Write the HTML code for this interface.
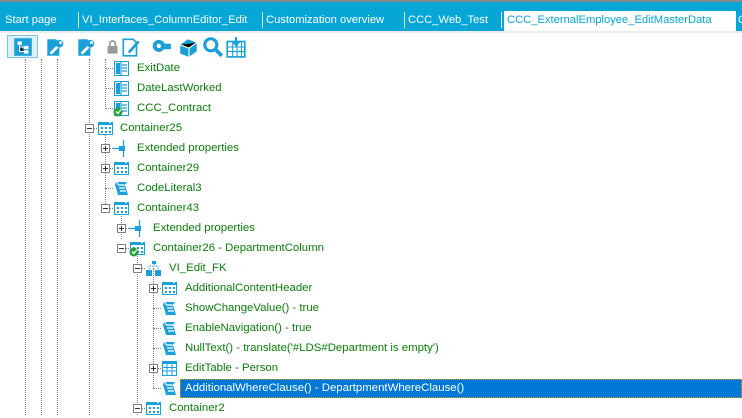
<!DOCTYPE html>
<html><head><meta charset="utf-8"><style>
*{margin:0;padding:0;box-sizing:border-box}
body{width:742px;height:415px;overflow:hidden;background:#fff;font-family:"Liberation Sans",sans-serif;font-size:11.4px;position:relative}
.topline{position:absolute;left:0;top:0;width:742px;height:2px;background:#8a8a8a}
.tabs{position:absolute;left:0;top:2px;width:742px;height:29px;background:#06a6d6}
.tab{position:absolute;top:11px;height:20px;line-height:19px;color:#fff;white-space:nowrap;font-size:11.2px}
.sep{position:absolute;top:12px;width:1px;height:16px;background:#d8eef7}
.act{position:absolute;left:504px;top:11px;width:232px;height:20px;background:#fff;color:#06a6d6;padding-left:3px;line-height:19px;font-size:11.2px;white-space:nowrap}
.gl{position:absolute;left:0;top:31px;width:742px;height:2px;background:#ececec}
.row{position:absolute;height:20px;line-height:20px;color:#0a7f0a;white-space:nowrap}
.vl{position:absolute;width:1px;border-left:1px dotted #808080}
.hl{position:absolute;height:1px;border-top:1px dotted #808080}
.box{position:absolute;width:9px;height:9px;border:1px solid #808080;background:#fff}
.box:before{content:"";position:absolute;left:1px;top:3px;width:5px;height:1px;background:#333}
.box.p:after{content:"";position:absolute;left:3px;top:1px;width:1px;height:5px;background:#333}
svg.i{position:absolute;width:17px;height:17px;overflow:visible}
.sel{position:absolute;left:180px;top:379px;width:562px;height:19px;background:#0078d7;border:1px dotted #e0a000}
.tb{position:absolute;top:36px;width:22px;height:22px}
</style></head><body>
<svg width="0" height="0" style="position:absolute">
<defs>
<symbol id="col" viewBox="0 0 17 17"><rect x="1.5" y="1.5" width="14" height="14" fill="#fff" stroke="#1aa0d8"/><rect x="3" y="3" width="4" height="11" fill="#1aa0d8"/><path d="M9 5h5M9 8h5M9 11h5M8 2v13" stroke="#1aa0d8" stroke-width="1.2"/></symbol>
<symbol id="cont" viewBox="0 0 17 17"><rect x="1.5" y="2.5" width="14" height="12" fill="#fff" stroke="#1aa0d8"/><rect x="1" y="2" width="15" height="3" fill="#1aa0d8"/><g fill="#1aa0d8"><rect x="4" y="7" width="2" height="2"/><rect x="8" y="7" width="2" height="2"/><rect x="12" y="7" width="2" height="2"/><rect x="4" y="11" width="2" height="2"/><rect x="8" y="11" width="2" height="2"/><rect x="12" y="11" width="2" height="2"/></g><rect x="12" y="2" width="2" height="1" fill="#fff"/></symbol>
<symbol id="ext" viewBox="0 0 17 17"><path d="M0 8.5h6M10.5 0v17" stroke="#1aa0d8" stroke-width="1.3"/><rect x="6" y="6" width="6" height="5" fill="#1aa0d8"/></symbol>
<symbol id="scr" viewBox="0 0 17 17"><path d="M3 2h11l-2 3 3 10H5L2 5z" fill="#1aa0d8"/><path d="M5 5h7M6 8h6M7 11h6" stroke="#fff" stroke-width="1.2"/><path d="M2 2q3 0 3 3" stroke="#fff" fill="none"/></symbol>
<symbol id="fk" viewBox="0 0 17 17"><path d="M4 11V6h9v5M9 2v4" stroke="#1aa0d8" stroke-dasharray="1 1" fill="none"/><rect x="1" y="10" width="6" height="6" fill="#1aa0d8"/><rect x="10" y="10" width="6" height="6" fill="#1aa0d8"/><rect x="7" y="1" width="4" height="3" fill="#1aa0d8"/></symbol>
<symbol id="tbl" viewBox="0 0 17 17"><rect x="1.5" y="1.5" width="14" height="14" fill="#fff" stroke="#1aa0d8"/><rect x="1" y="1" width="15" height="3" fill="#1aa0d8"/><path d="M1 7.5h15M1 11h15M6 1v15M11 1v15" stroke="#1aa0d8"/></symbol>
<symbol id="chk" viewBox="0 0 17 17"><circle cx="5" cy="12" r="4.5" fill="#2e9e3a"/><path d="M3 11.5l2 2 3-4" stroke="#fff" stroke-width="1.3" fill="none"/></symbol>
</defs></svg>

<div class="topline"></div>
<div class="tabs"></div>
<div class="tab" style="left:5px">Start page</div>
<div class="sep" style="left:78px"></div>
<div class="tab" style="left:82px">VI_Interfaces_ColumnEditor_Edit</div>
<div class="sep" style="left:262px"></div>
<div class="tab" style="left:266px">Customization overview</div>
<div class="sep" style="left:404px"></div>
<div class="tab" style="left:408px">CCC_Web_Test</div>
<div class="sep" style="left:501px"></div>
<div class="act">CCC_ExternalEmployee_EditMasterData</div>
<div class="tab" style="left:738px">C</div>
<div class="gl"></div>

<!-- toolbar -->
<div style="position:absolute;left:7px;top:35px;width:31px;height:23px;border:1px solid #7cc4e4;background:#ddf0fa"></div>
<svg class="tb" style="left:12px" viewBox="0 0 20 20"><rect x="2" y="2" width="16" height="16" fill="#1aa0d8"/><rect x="5" y="5" width="4" height="3" fill="#fff"/><rect x="11" y="9" width="4" height="3" fill="#fff"/><rect x="11" y="13" width="4" height="3" fill="#fff"/><path d="M7 8v6h4M7 10h4" stroke="#fff"/></svg>
<svg class="tb" style="left:44px" viewBox="0 0 20 20"><path d="M3 3h8l3 3v12H3z" fill="#1aa0d8"/><path d="M6 16l7-7" stroke="#fff" stroke-width="2.5"/><circle cx="14" cy="7" r="3.5" fill="#1aa0d8"/><circle cx="15" cy="6" r="1.3" fill="#fff"/></svg>
<svg class="tb" style="left:75px" viewBox="0 0 20 20"><path d="M3 3h8l3 3v12H3z" fill="#1aa0d8"/><path d="M6 16l7-7" stroke="#fff" stroke-width="2.5"/><circle cx="14" cy="7" r="3.5" fill="#1aa0d8"/><circle cx="15" cy="6" r="1.3" fill="#fff"/></svg>
<svg class="tb" style="left:101px" viewBox="0 0 20 20"><rect x="6" y="9" width="9" height="7" fill="#999"/><path d="M8 9V7a2.5 2.5 0 0 1 5 0v2" stroke="#999" stroke-width="1.6" fill="none"/></svg>
<svg class="tb" style="left:120px" viewBox="0 0 20 20"><path d="M3 3h9l3 3v12H3z" fill="#fff" stroke="#1aa0d8" stroke-width="1.5"/><path d="M8 15l9-10" stroke="#1aa0d8" stroke-width="2.5"/></svg>
<svg class="tb" style="left:150px" viewBox="0 0 20 20"><circle cx="8" cy="9" r="5.5" fill="#1aa0d8"/><circle cx="8" cy="9" r="2" fill="#fff"/><rect x="12" y="7" width="7" height="5" fill="#1aa0d8"/></svg>
<svg class="tb" style="left:178px" viewBox="0 0 20 20"><path d="M2 8l7-5 8 3v8l-7 5-8-3z" fill="#1aa0d8"/><path d="M2 8l8 3 7-5M10 11v8" stroke="#fff"/></svg>
<svg class="tb" style="left:202px" viewBox="0 0 20 20"><circle cx="8" cy="8" r="5.5" stroke="#1aa0d8" stroke-width="2.8" fill="none"/><path d="M12 12l6 6" stroke="#1aa0d8" stroke-width="3.5"/></svg>
<svg class="tb" style="left:225px" viewBox="0 0 20 20"><rect x="2" y="5" width="16" height="14" fill="#fff" stroke="#1aa0d8" stroke-width="1.5"/><path d="M2 10h16M2 14h16M7 5v14M11 5v14M15 5v14" stroke="#1aa0d8"/><path d="M10 1v6M7 5l3 3 3-3" stroke="#1aa0d8" stroke-width="2" fill="none"/></svg>

<div class="vl" style="left:25px;top:59px;height:356px"></div>
<div class="vl" style="left:41px;top:59px;height:356px"></div>
<div class="vl" style="left:57px;top:59px;height:356px"></div>
<div class="vl" style="left:89px;top:59px;height:356px"></div>
<div class="vl" style="left:105px;top:59px;height:50px"></div>
<div class="vl" style="left:105px;top:128px;height:76px"></div>
<div class="vl" style="left:121px;top:213px;height:26px"></div>
<div class="vl" style="left:137px;top:248px;height:167px"></div>
<div class="vl" style="left:153px;top:268px;height:120px"></div>

<div class="hl" style="left:105px;top:68px;width:8px"></div>
<div class="hl" style="left:105px;top:88px;width:8px"></div>
<div class="hl" style="left:105px;top:108px;width:8px"></div>
<div class="hl" style="left:89px;top:128px;width:8px"></div>
<div class="hl" style="left:105px;top:148px;width:8px"></div>
<div class="hl" style="left:105px;top:168px;width:8px"></div>
<div class="hl" style="left:105px;top:188px;width:8px"></div>
<div class="hl" style="left:105px;top:208px;width:8px"></div>
<div class="hl" style="left:121px;top:228px;width:8px"></div>
<div class="hl" style="left:121px;top:248px;width:8px"></div>
<div class="hl" style="left:137px;top:268px;width:8px"></div>
<div class="hl" style="left:153px;top:288px;width:8px"></div>
<div class="hl" style="left:153px;top:308px;width:8px"></div>
<div class="hl" style="left:153px;top:328px;width:8px"></div>
<div class="hl" style="left:153px;top:348px;width:8px"></div>
<div class="hl" style="left:153px;top:368px;width:8px"></div>
<div class="hl" style="left:153px;top:388px;width:8px"></div>
<div class="hl" style="left:137px;top:408px;width:8px"></div>

<div class="box" style="left:85px;top:124px"></div>
<div class="box p" style="left:101px;top:144px"></div>
<div class="box p" style="left:101px;top:164px"></div>
<div class="box" style="left:101px;top:204px"></div>
<div class="box p" style="left:117px;top:224px"></div>
<div class="box" style="left:117px;top:244px"></div>
<div class="box" style="left:133px;top:264px"></div>
<div class="box p" style="left:149px;top:284px"></div>
<div class="box p" style="left:149px;top:364px"></div>
<div class="box" style="left:133px;top:404px"></div>

<div class="sel"></div>

<svg class="i" style="left:113px;top:60px"><use href="#col" width="17" height="17"/></svg>
<svg class="i" style="left:113px;top:80px"><use href="#col" width="17" height="17"/></svg>
<svg class="i" style="left:113px;top:100px"><use href="#col" width="17" height="17"/><use href="#chk" width="17" height="17"/></svg>
<svg class="i" style="left:97px;top:120px"><use href="#cont" width="17" height="17"/></svg>
<svg class="i" style="left:113px;top:140px"><use href="#ext" width="17" height="17"/></svg>
<svg class="i" style="left:113px;top:160px"><use href="#cont" width="17" height="17"/></svg>
<svg class="i" style="left:113px;top:180px"><use href="#scr" width="17" height="17"/></svg>
<svg class="i" style="left:113px;top:200px"><use href="#cont" width="17" height="17"/></svg>
<svg class="i" style="left:129px;top:220px"><use href="#ext" width="17" height="17"/></svg>
<svg class="i" style="left:129px;top:240px"><use href="#cont" width="17" height="17"/><use href="#chk" width="17" height="17"/></svg>
<svg class="i" style="left:145px;top:260px"><use href="#fk" width="17" height="17"/></svg>
<svg class="i" style="left:161px;top:280px"><use href="#cont" width="17" height="17"/></svg>
<svg class="i" style="left:161px;top:300px"><use href="#scr" width="17" height="17"/></svg>
<svg class="i" style="left:161px;top:320px"><use href="#scr" width="17" height="17"/></svg>
<svg class="i" style="left:161px;top:340px"><use href="#scr" width="17" height="17"/></svg>
<svg class="i" style="left:161px;top:360px"><use href="#tbl" width="17" height="17"/></svg>
<svg class="i" style="left:161px;top:380px"><use href="#scr" width="17" height="17"/></svg>
<svg class="i" style="left:145px;top:400px"><use href="#cont" width="17" height="17"/></svg>

<div class="row" style="left:137px;top:58px">ExitDate</div>
<div class="row" style="left:137px;top:78px">DateLastWorked</div>
<div class="row" style="left:137px;top:98px">CCC_Contract</div>
<div class="row" style="left:120px;top:118px">Container25</div>
<div class="row" style="left:137px;top:138px">Extended properties</div>
<div class="row" style="left:137px;top:158px">Container29</div>
<div class="row" style="left:137px;top:178px">CodeLiteral3</div>
<div class="row" style="left:137px;top:198px">Container43</div>
<div class="row" style="left:153px;top:218px">Extended properties</div>
<div class="row" style="left:153px;top:238px">Container26 - DepartmentColumn</div>
<div class="row" style="left:169px;top:258px">VI_Edit_FK</div>
<div class="row" style="left:185px;top:278px">AdditionalContentHeader</div>
<div class="row" style="left:185px;top:298px">ShowChangeValue() - true</div>
<div class="row" style="left:185px;top:318px">EnableNavigation() - true</div>
<div class="row" style="left:185px;top:338px">NullText() - translate('#LDS#Department is empty')</div>
<div class="row" style="left:185px;top:358px">EditTable - Person</div>
<div class="row" style="left:185px;top:378px;color:#fff">AdditionalWhereClause() - DepartpmentWhereClause()</div>
<div class="row" style="left:169px;top:398px">Container2</div>
</body></html>
